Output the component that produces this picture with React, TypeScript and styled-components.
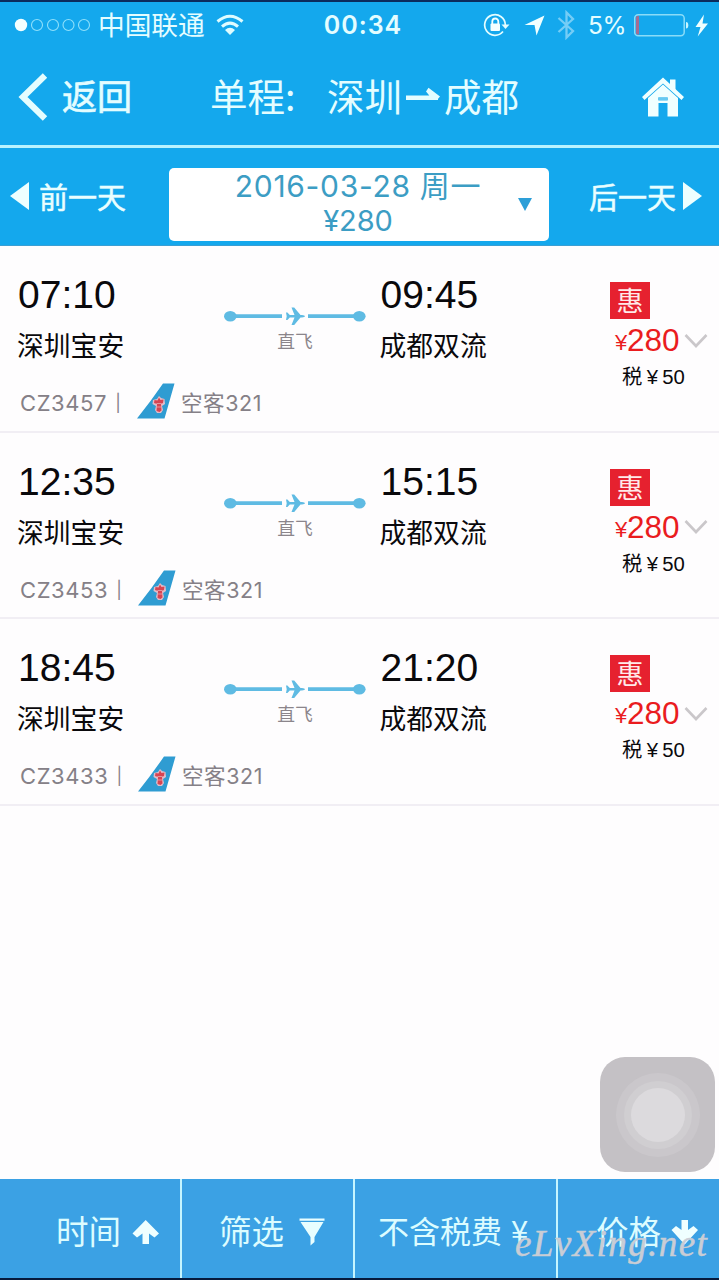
import React from "react";
import styled, { createGlobalStyle } from "styled-components";

const GlobalStyle = createGlobalStyle`
  * { box-sizing: border-box; }
  body { margin: 0; background: #fefdfe; }
`;

const cjk = `"Noto Sans CJK SC", sans-serif`;
const latin = `"Liberation Sans", "Noto Sans CJK SC", sans-serif`;
const ui = `Inter, "Noto Sans CJK SC", sans-serif`;

const Page = styled.div`
  position: relative;
  width: 719px;
  height: 1280px;
  display: flex;
  flex-direction: column;
  overflow: hidden;
  background: #fefdfe;
  border-top: 2px solid #0b2b5c;
  border-bottom: 2px solid #061a3c;
  font-family: ${cjk};
  white-space: nowrap;
`;

const StatusBar = styled.header`
  height: 46px;
  flex: none;
  display: grid;
  grid-template-columns: 303px 120px 1fr;
  align-items: center;
  background: #14a8ed;
  color: #e4fdff;
`;

const Carrier = styled.div`
  display: flex;
  align-items: center;
  height: 46px;
  padding-left: 14px;
  font-size: 26.7px;
  line-height: 44px;
`;

const CarrierName = styled.span`
  margin-left: 7px;
  margin-right: 11px;
  height: 46px;
`;

const Clock = styled.div`
  text-align: center;
  font: 600 25px/46px ${ui};
  letter-spacing: 1px;
`;

const Indicators = styled.div`
  display: flex;
  align-items: center;
  height: 46px;
  padding-left: 60px;

  svg { flex: none; }
`;

const Spacer = styled.span<{ $w: number }>`
  width: ${(p) => p.$w}px;
`;

const Battery = styled.span`
  flex: none;
  width: 45px;
  margin-left: 13px;
  margin-right: 1px;
  font: 400 24.5px/46px ${ui};
  letter-spacing: -0.4px;
`;

const NavBar = styled.nav`
  height: 100px;
  flex: none;
  display: grid;
  grid-template-columns: 210px 431px 1fr;
  align-items: center;
  background: #14a8ed;
  border-bottom: 3px solid #b9f3ff;
  color: #e4fdff;
`;

const Back = styled.div`
  display: flex;
  align-items: center;
  padding-left: 18px;
  gap: 13px;
  font-size: 35px;
  line-height: 50px;
  -webkit-text-stroke: 0.6px currentColor;
`;

const BackLabel = styled.span`
  margin-bottom: 3px;
`;

const Title = styled.h1`
  margin: 0 0 3px;
  display: flex;
  align-items: center;
  font-size: 37.5px;
  line-height: 50px;
  font-weight: 400;
`;

const TripKind = styled.span`
  width: 117px;
`;

const DateBar = styled.section`
  height: 98px;
  flex: none;
  display: grid;
  grid-template-columns: 169px 380px 1fr;
  background: #14a8ed;
  border-bottom: 1px solid #3a9fd4;
`;

const DayLink = styled.div<{ $inset: number; $gap: number }>`
  display: flex;
  align-items: center;
  height: 96px;
  padding-left: ${(p) => p.$inset}px;
  gap: ${(p) => p.$gap}px;
  color: #e9feff;
  font-size: 29px;
  -webkit-text-stroke: 0.5px currentColor;
`;

const DatePicker = styled.div`
  margin-top: 20px;
  height: 73px;
  display: grid;
  grid-template-columns: 1fr 31px;
  align-items: center;
  background: #fff;
  border-radius: 5px;
  color: #3c9dc4;
`;

const DateText = styled.div`
  padding-left: 29px;
  text-align: center;
  font: 400 30px/34px ${ui};
`;

const DateLine = styled.div`
  height: 35px;
  letter-spacing: 0.7px;
`;

const FareLine = styled.div`
  height: 36px;
  font-size: 29px;
  letter-spacing: -0.1px;
`;

const FlightRow = styled.article`
  height: 186.6px;
  flex: none;
  border-bottom: 2px solid #f1eef4;
`;

const FlightMain = styled.div`
  height: 134px;
  display: grid;
  grid-template-columns: 224px 142px 244px 1fr;
`;

const Stop = styled.div<{ $inset: number }>`
  padding: 24px 0 0 ${(p) => p.$inset}px;
  color: #0a090c;
`;

const Time = styled.div`
  padding-left: 1px;
  font: 400 39px/50px ${latin};
`;

const City = styled.div`
  margin-top: -1px;
  font-size: 26.8px;
  line-height: 52px;
`;

const Route = styled.div`
  display: flex;
  flex-direction: column;
  align-items: center;
  padding-top: 60px;
  color: #8b858b;
  font-size: 17.8px;
  line-height: 28px;
`;

const Fare = styled.div`
  padding-top: 36px;
  color: #0a090c;
`;

const Deal = styled.div`
  width: 40px;
  height: 37px;
  background: #e6212f;
  color: #ffeaea;
  font-size: 27px;
  line-height: 35px;
  text-align: center;
`;

const Price = styled.div`
  display: flex;
  align-items: center;
  height: 43px;
  padding-left: 5px;
  color: #ea1c1e;
  font: 400 31.5px/43px ${latin};
`;

const Yen = styled.span`
  width: 12px;
  padding-top: 4px;
  font-size: 22px;
`;

const Amount = styled.span`
  width: 57px;
`;

const Tax = styled.div`
  display: flex;
  padding-left: 12px;
  font: 400 20.3px/31px ${latin};
`;

const TaxYen = styled.span`
  width: 20px;
  text-align: center;
`;

const Meta = styled.div<{ $shift: number }>`
  display: flex;
  align-items: center;
  height: 46px;
  padding-left: 20px;
  color: #858087;
  font: 400 21.5px/46px ${ui};
  letter-spacing: 0.6px;

  svg {
    margin: 0 6px 4px ${(p) => p.$shift}px;
  }
`;

const FlightNo = styled.span`
  display: flex;
  align-items: center;
  width: 117px;
  font-size: 22px;
  letter-spacing: 0.6px;
`;

const Divider = styled.span`
  margin-left: 8px;
  font-size: 17px;
`;

const Empty = styled.div`
  flex: 1;
`;

const Footer = styled.footer`
  height: 99px;
  flex: none;
  display: grid;
  grid-template-columns: 182px 173px 203px 161px;
  background: #3ba1e4;
  color: #dcfcff;
`;

const Tab = styled.div<{ $inset: number; $gap?: number; $last?: boolean }>`
  display: flex;
  align-items: center;
  padding: 2px 0 0 ${(p) => p.$inset}px;
  gap: ${(p) => p.$gap ?? 0}px;
  border-right: ${(p) => (p.$last ? "none" : "2px solid #c5f5ff")};
  font-size: 32.5px;

  svg { margin-top: 4px; }
`;

const TaxTab = styled.span`
  font-size: 31px;
`;

const TabYen = styled.span`
  margin-left: 9px;
  font-size: 31px;
`;

const AssistiveTouch = styled.div`
  position: absolute;
  left: 600px;
  top: 1055px;
  width: 115px;
  height: 115px;
  border-radius: 25px;
  display: grid;
  place-items: center;
  background: #c4c1c5;
`;

const Ring = styled.div`
  width: 84px;
  height: 84px;
  border-radius: 50%;
  display: grid;
  place-items: center;
  background: #cac7cb;
`;

const Knob = styled.div`
  width: 54px;
  height: 54px;
  border-radius: 50%;
  background: #dcdadd;
  box-shadow: 0 0 0 7px #d0ced1;
`;

const Watermark = styled.div`
  position: absolute;
  left: 515px;
  top: 1219px;
  font: italic 400 37px/46px "Liberation Serif", serif;
  letter-spacing: 1.4px;
  color: #c9cdd5;
  -webkit-text-stroke: 0.5px #c9cdd5;
`;

const flights = [
  { dep: "07:10", arr: "09:45", no: "CZ3457", shift: 0 },
  { dep: "12:35", arr: "15:15", no: "CZ3453", shift: 1 },
  { dep: "18:45", arr: "21:20", no: "CZ3433", shift: 1 },
];

const SignalDots = () => (
  <svg width="77" height="14" viewBox="0 0 77 14">
    <circle cx="7" cy="7" r="6.2" fill="#f4ffff" />
    {[23, 39, 54.5, 70].map((x) => (
      <circle key={x} cx={x} cy="7" r="5.5" fill="none" stroke="#8fe0fb" strokeWidth="1.1" />
    ))}
  </svg>
);

const Wifi = () => (
  <svg width="28" height="22" viewBox="0 0 28 22">
    <g fill="none" stroke="#dffcff" strokeWidth="3">
      <path d="M1.500 7.500Q14-3 26.500 7.500" />
      <path d="M6 12.700Q14 5.600 22 12.700" />
    </g>
    <path d="M9 16Q14 11.500 19 16L14 21Z" fill="#dffcff" />
  </svg>
);

const RotationLock = () => (
  <svg width="27" height="24" viewBox="0 0 27 24">
    <path d="M20 18.500A10.300 10.300 0 1 1 22.300 12" fill="none" stroke="#e4fdff" strokeWidth="1.7" />
    <path d="M18.500 11.500H26.500L22.500 16Z" fill="#e4fdff" />
    <rect x="7.500" y="10.500" width="9.500" height="7.500" rx="1" fill="#f4ffff" />
    <path d="M9.300 11V8.500a3 3 0 0 1 6 0V11" fill="none" stroke="#f4ffff" strokeWidth="1.8" />
  </svg>
);

const LocationArrow = () => (
  <svg width="21" height="21" viewBox="0 0 21 21">
    <path d="M20.500 0.500L0.500 10H10.500L12.500 20.500Z" fill="#f0ffff" />
  </svg>
);

const Bluetooth = () => (
  <svg width="18" height="30" viewBox="0 0 18 30">
    <path d="M1.500 8L16 21L9.500 27.500V2.500L16 9L1.500 22" fill="none" stroke="#75cdf6" strokeWidth="2.300" />
  </svg>
);

const BatteryIcon = () => (
  <svg width="76" height="24" viewBox="0 0 76 24">
    <rect x="0.700" y="1.700" width="49.500" height="21" rx="3.500" fill="none" stroke="#8adcf8" strokeWidth="1.500" />
    <path d="M2 4.500q0-1.500 1.500-1.500H5v18.400H3.500q-1.500 0-1.500-1.500z" fill="#a66b91" />
    <path d="M52 9q2.300 0 2.300 3.200t-2.300 3.300z" fill="#c8f6ff" />
    <path d="M70 1.500L61.500 14h5l-2.800 9.500L74 10.500h-5.500z" fill="#efffff" />
  </svg>
);

const BackIcon = () => (
  <svg width="31" height="50" viewBox="0 0 31 50">
    <path d="M27 3.500L5 25L27 46.500" fill="none" stroke="#e4fdff" strokeWidth="6.300" />
  </svg>
);

const RouteArrow = () => (
  <svg width="42" height="16" viewBox="0 0 42 16">
    <path d="M4 8.500H36V13H4ZM24 4.500L26.500 0.800L38 9.500L35 13H31Z" fill="#e4fdff" />
  </svg>
);

const HomeIcon = () => (
  <svg width="44" height="40" viewBox="0 0 44 40">
    <path d="M29 2.500h5.500v11L29 9z" fill="#f0ffff" />
    <path d="M22 0.500L43 20l-2.500 3L22 6.500L3.500 23L1 20z" fill="#f0ffff" />
    <path d="M22 7.500L37 21v18.500H26.500V20.500H17.500V39.500H7V21z" fill="#f0ffff" />
    <path d="M17 20.500h10v3H17z" fill="#67c9f1" />
    <path d="M17 23.500h10v2.500H17z" fill="#f0ffff" />
  </svg>
);

const Triangle = ({ flip = false }: { flip?: boolean }) => (
  <svg width="19" height="28" viewBox="0 0 19 28">
    <path d={flip ? "M0 0V28L19 14Z" : "M19 0V28L0 14Z"} fill="#edffff" />
  </svg>
);

const Caret = () => (
  <svg width="14" height="13" viewBox="0 0 14 13">
    <path d="M0 0H14L7 13Z" fill="#2d9fd8" />
  </svg>
);

const RouteLine = () => (
  <svg width="142" height="20" viewBox="0 0 142 20">
    <g fill="#5fbbe3">
      <ellipse cx="6.300" cy="10.200" rx="6.300" ry="5.300" />
      <ellipse cx="135.300" cy="10.200" rx="6.300" ry="5.300" />
      <path d="M10 8.300H58V12H10ZM84 8.300H132V12H84Z" />
      <path d="M62 6.500h1.400l2.400 2.400h4.700L67.500 1.500h2.700l6.300 7.400h1.500q3 .2 3 1.300t-3 1.300h-1.500l-6.300 7.400h-2.700l3-7.400h-4.700L63.400 14H62l.7-3.800z" />
    </g>
  </svg>
);

const TailLogo = () => (
  <svg width="38" height="36" viewBox="0 0 38 36">
    <path d="M0 35.500Q14 18 26 0.500H37.500L27.500 35.500Z" fill="#2f9cd2" />
    <path d="M22 13l2 2 3.500 1 .5 5-3 2 1 4-2 3h-4l-2-3 1-4-3.500-2 .5-4 4-1z" fill="#e3bcc9" />
    <path d="M22 14.500l1.500 2.500 3-.5-.5 3.500-2 1 .5 6.500-2 1.500-3-1 .5-7-3-1 .5-3 3 .5z" fill="#d84452" />
    <path d="M19.500 20.500h5M20 24h4" stroke="#e7a9b4" strokeWidth=".8" />
  </svg>
);

const Chevron = () => (
  <svg width="24" height="16" viewBox="0 0 24 16">
    <path d="M1.500 2L12 13L22.500 2" fill="none" stroke="#cac7ca" strokeWidth="2.600" />
  </svg>
);

const BoldArrow = ({ down = false }: { down?: boolean }) => (
  <svg width="28" height="26" viewBox="0 0 28 26">
    <path
      d={
        down
          ? "M10.500 1h6.500v10l5.500-4 4.500 4L13.700 25.500L0.500 11L5 7l5.500 4z"
          : "M10.500 25h6.500V14.500l5.500 4 4.500-4L13.700 1L0.500 14.500l4.500 4 5.500-4z"
      }
      fill="#efffff"
    />
  </svg>
);

const Funnel = () => (
  <svg width="26" height="28" viewBox="0 0 26 28">
    <path d="M0.500 0.500H25.500V2.700H0.500ZM1.500 4H24.500L15.500 19V24L11.500 27.500V19Z" fill="#e8feff" />
  </svg>
);

export default function App() {
  return (
    <>
      <GlobalStyle />
      <Page>
        <StatusBar>
          <Carrier>
            <SignalDots />
            <CarrierName>中国联通</CarrierName>
            <Wifi />
          </Carrier>
          <Clock>00:34</Clock>
          <Indicators>
            <RotationLock />
            <Spacer $w={14} />
            <LocationArrow />
            <Spacer $w={12} />
            <Bluetooth />
            <Battery>5%</Battery>
            <BatteryIcon />
          </Indicators>
        </StatusBar>
        <NavBar>
          <Back>
            <BackIcon />
            <BackLabel>返回</BackLabel>
          </Back>
          <Title>
            <TripKind>单程:</TripKind>
            深圳
            <RouteArrow />
            成都
          </Title>
          <HomeIcon />
        </NavBar>
        <DateBar>
          <DayLink $inset={10} $gap={10}>
            <Triangle />
            前一天
          </DayLink>
          <DatePicker>
            <DateText>
              <DateLine>2016-03-28 周一</DateLine>
              <FareLine>¥280</FareLine>
            </DateText>
            <Caret />
          </DatePicker>
          <DayLink $inset={40} $gap={7}>
            后一天
            <Triangle flip />
          </DayLink>
        </DateBar>
        {flights.map((f) => (
          <FlightRow key={f.no}>
            <FlightMain>
              <Stop $inset={17}>
                <Time>{f.dep}</Time>
                <City>深圳宝安</City>
              </Stop>
              <Route>
                <RouteLine />
                直飞
              </Route>
              <Stop $inset={13.5}>
                <Time>{f.arr}</Time>
                <City>成都双流</City>
              </Stop>
              <Fare>
                <Deal>惠</Deal>
                <Price>
                  <Yen>¥</Yen>
                  <Amount>280</Amount>
                  <Chevron />
                </Price>
                <Tax>
                  税<TaxYen>¥</TaxYen>50
                </Tax>
              </Fare>
            </FlightMain>
            <Meta $shift={f.shift}>
              <FlightNo>
                {f.no}
                <Divider>|</Divider>
              </FlightNo>
              <TailLogo />
              空客321
            </Meta>
          </FlightRow>
        ))}
        <Empty />
        <Footer>
          <Tab $inset={56} $gap={11}>
            时间
            <BoldArrow />
          </Tab>
          <Tab $inset={37} $gap={15}>
            筛选
            <Funnel />
          </Tab>
          <Tab $inset={23}>
            <TaxTab>不含税费</TaxTab>
            <TabYen>¥</TabYen>
          </Tab>
          <Tab $inset={38} $gap={10} $last>
            价格
            <BoldArrow down />
          </Tab>
        </Footer>
        <AssistiveTouch>
          <Ring>
            <Knob />
          </Ring>
        </AssistiveTouch>
        <Watermark>eLvXing.net</Watermark>
      </Page>
    </>
  );
}
